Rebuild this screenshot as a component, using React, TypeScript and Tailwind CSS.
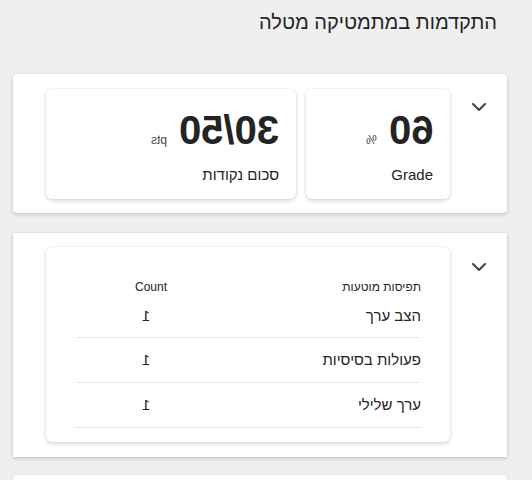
import { ChevronDown } from "lucide-react";

const misconceptions = [
  { name: "הצב ערך", count: 1 },
  { name: "פעולות בסיסיות", count: 1 },
  { name: "ערך שלילי", count: 1 },
];

function Toggle({ offset }: { offset: string }) {
  return (
    <div className={`flex w-[57px] shrink-0 justify-center text-[#424242] ${offset}`}>
      <ChevronDown size={24} strokeWidth={2} />
    </div>
  );
}

function StatCard({ value, unit, label, width }: { value: string; unit: string; label: string; width: string }) {
  return (
    <div className={`flex h-[110px] flex-col rounded-[6px] bg-white px-[17px] pt-[21px] shadow-[0_0_2px_rgba(0,0,0,0.12),0_2px_4px_rgba(0,0,0,0.14)] ${width}`}>
      <div className="flex h-[40px] items-baseline gap-3">
        <span className="inline-block -scale-x-100 text-[40px] leading-[40px] font-bold text-[#242424]">{value}</span>
        <span className="inline-block -scale-x-100 text-[12px] text-[#424242]">{unit}</span>
      </div>
      <div className="mt-[15px] text-[15px] leading-5 text-[#242424]">{label}</div>
    </div>
  );
}

export default function App() {
  return (
    <div
      dir="rtl"
      className="h-[480px] overflow-hidden bg-[#efefef] pr-[25px] pl-[13px] font-['Liberation_Sans','Noto_Sans',sans-serif] text-[#242424]"
    >
      <h1 className="pt-[8px] pr-[10px] text-[20px] leading-7 font-normal">התקדמות במתמטיקה מטלה</h1>

      <section className="mt-[38px] flex rounded-[4px] bg-white pt-[15px] pb-[14px] shadow-[0_0_2px_rgba(0,0,0,0.12),0_2px_4px_rgba(0,0,0,0.14)]">
        <Toggle offset="pt-[6px]" />
        <div className="flex gap-[10px]">
          <StatCard value="60" unit="%" label="Grade" width="w-[144px]" />
          <StatCard value="30/50" unit="pts" label="סכום נקודות" width="w-[250px]" />
        </div>
      </section>

      <section className="mt-[20px] flex bg-white pt-[14px] pb-[15px] shadow-[0_0_2px_rgba(0,0,0,0.12),0_2px_4px_rgba(0,0,0,0.14)]">
        <Toggle offset="pt-[8px]" />
        <div className="w-[404px] rounded-[6px] bg-white px-[29px] pt-[32px] pb-[14px] shadow-[0_0_2px_rgba(0,0,0,0.12),0_2px_4px_rgba(0,0,0,0.14)]">
          <div className="flex text-[12px] leading-4">
            <div className="flex-1">תפיסות מוטעות</div>
            <div className="w-[92px]">Count</div>
          </div>
          {misconceptions.map((row, i) => (
            <div
              key={row.name}
              className={`flex items-center border-b border-[#e8e8e8] text-[15px] ${i === 0 ? "h-[43px]" : "h-[45px]"}`}
            >
              <div className="flex-1">{row.name}</div>
              <div className="w-[92px] pr-[17px]">
                <span className="inline-block -scale-x-100">{row.count}</span>
              </div>
            </div>
          ))}
        </div>
      </section>

      <section className="mt-[18px] h-[100px] rounded-t-[4px] bg-white shadow-[0_0_2px_rgba(0,0,0,0.12),0_2px_4px_rgba(0,0,0,0.14)]" />
    </div>
  );
}
